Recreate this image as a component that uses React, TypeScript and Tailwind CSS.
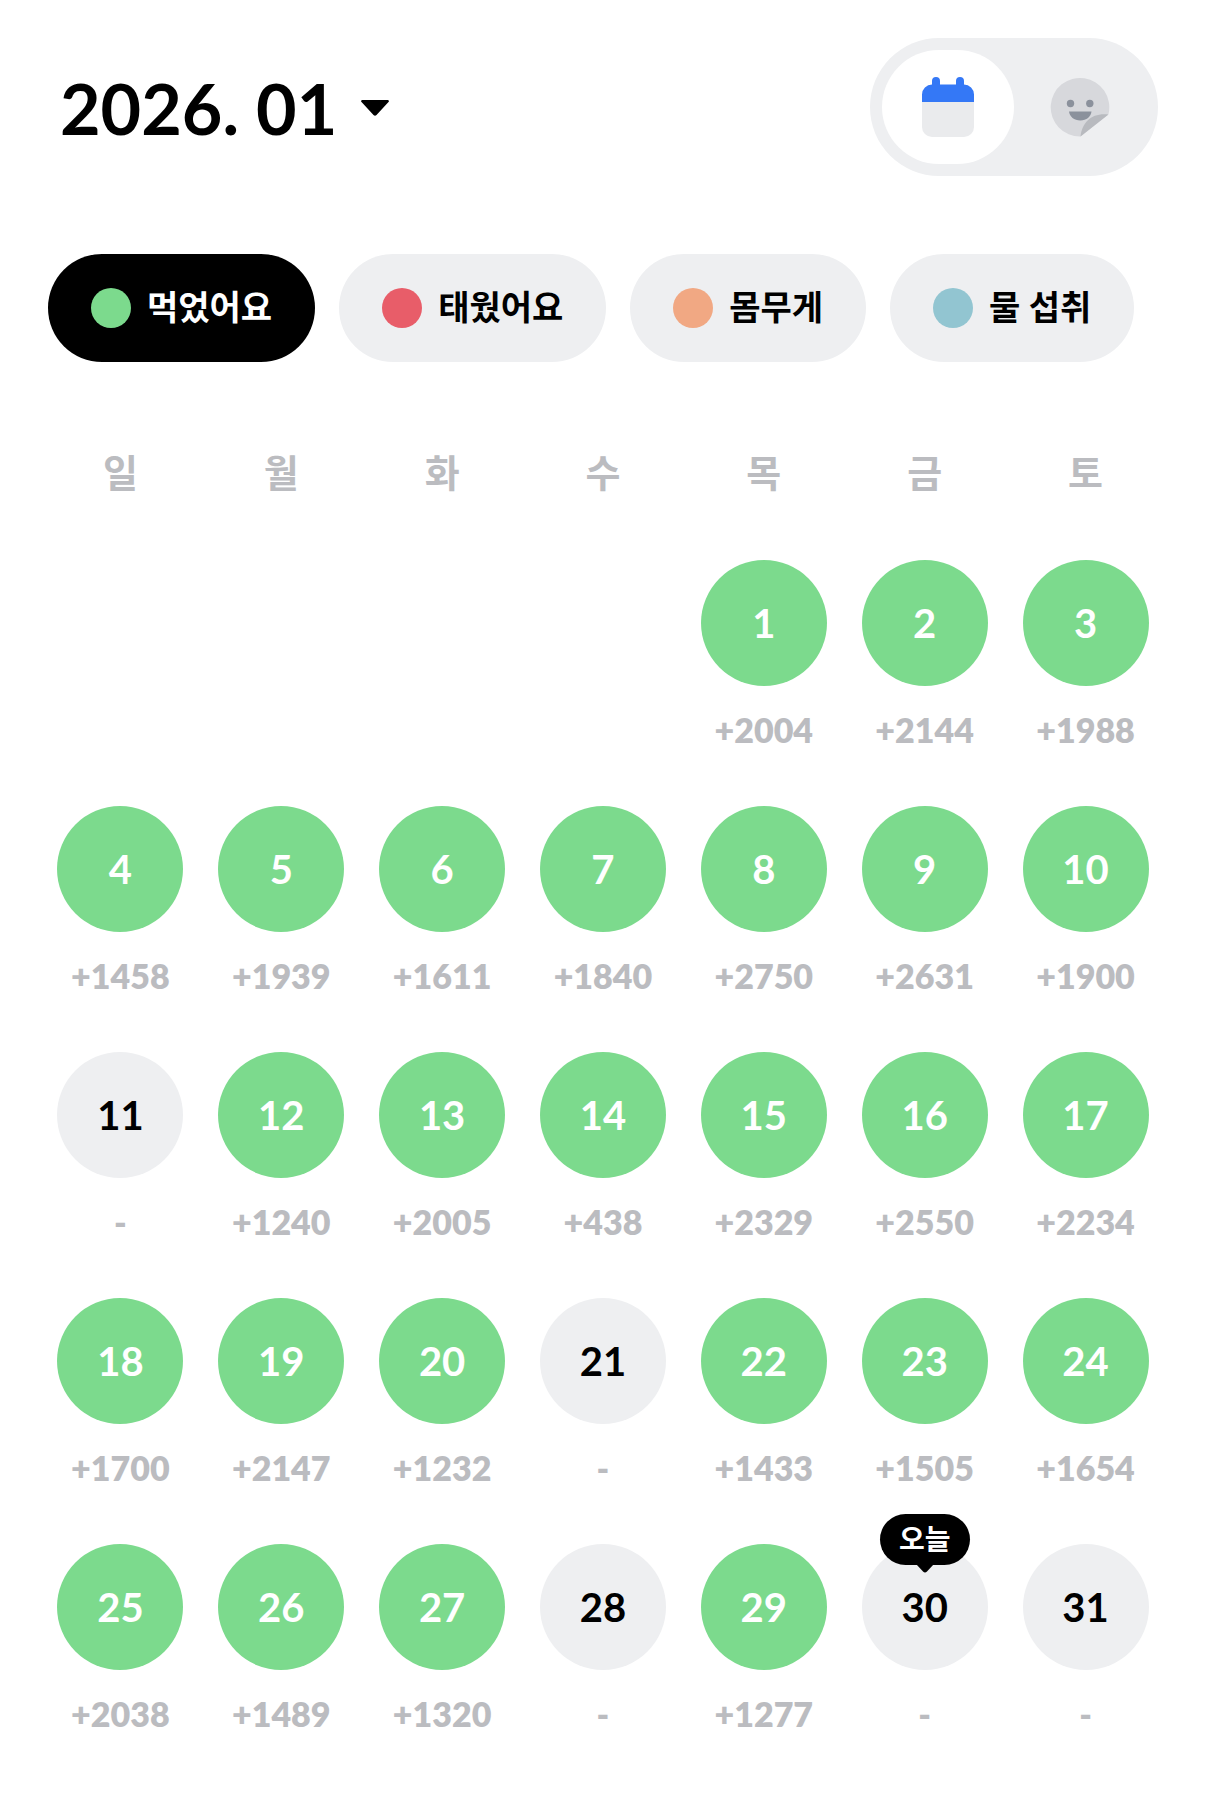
import { useState } from "react";
import clsx from "clsx";

const filters = [
  { label: "먹었어요", color: "bg-[#7cda8d]" },
  { label: "태웠어요", color: "bg-[#e85d69]" },
  { label: "몸무게", color: "bg-[#f1a883]" },
  { label: "물 섭취", color: "bg-[#92c5d1]" },
];

const weekdays = ["일", "월", "화", "수", "목", "금", "토"];

const today = 30;
const firstWeekday = 4;

// calories eaten per day, null when nothing was logged
const calories = [
  2004, 2144, 1988, 1458, 1939, 1611, 1840, 2750, 2631, 1900, null, 1240, 2005,
  438, 2329, 2550, 2234, 1700, 2147, 1232, null, 1433, 1505, 1654, 2038, 1489,
  1320, null, 1277, null, null,
];

const cells = [
  ...Array.from({ length: firstWeekday }, () => 0),
  ...calories.map((_, i) => i + 1),
];

const weeks = Array.from({ length: Math.ceil(cells.length / 7) }, (_, i) =>
  cells.slice(i * 7, i * 7 + 7)
);

function CalendarIcon() {
  return (
    <svg width="52" height="60" viewBox="0 0 52 60" aria-hidden="true">
      <path d="M0 25h52v25a10 10 0 0 1-10 10H10A10 10 0 0 1 0 50z" fill="#eaebed" />
      <path
        d="M10 7.500V4a4 4 0 0 1 8 0v3.500h16V4a4 4 0 0 1 8 0v3.500a10 10 0 0 1 10 10V25H0v-7.500A10 10 0 0 1 10 7.500z"
        fill="#3478f6"
      />
    </svg>
  );
}

function StickerIcon() {
  return (
    <svg width="60" height="60" viewBox="0 0 60 60" aria-hidden="true">
      <path d="M58.500 37A29.300 29.300 0 1 0 30.500 59.500z" fill="#d7d8dc" />
      <circle cx="20.500" cy="26.500" r="3.700" fill="#8b919c" />
      <circle cx="39.800" cy="26.500" r="3.700" fill="#8b919c" />
      <path d="M19 34.500h22.500c-.5 5-5 9-11.200 9s-10.800-4-11.300-9z" fill="#8b919c" />
      <path d="M30.500 59.500C32 45 42 35.500 58.500 37.500z" fill="#b8babf" />
    </svg>
  );
}

function TodayBadge() {
  return (
    <span className="absolute -top-[30px] left-1/2 flex h-[51px] w-[90px] -translate-x-1/2 items-center justify-center rounded-full bg-black pb-[2px] text-[28px] leading-none font-bold text-white">
      오늘
      <svg
        className="absolute top-full left-1/2 -mt-px -translate-x-1/2"
        width="18"
        height="9"
        viewBox="0 0 18 9"
        aria-hidden="true"
      >
        <path d="M0 0h18l-7 7.500q-2 2-4 0z" fill="#000" />
      </svg>
    </span>
  );
}

function Day({ day }: { day: number }) {
  const kcal = calories[day - 1];
  return (
    <div className="flex flex-col items-center pb-14">
      <button
        type="button"
        className={clsx(
          "relative flex size-[126px] items-center justify-center rounded-full text-[40px] leading-none font-bold",
          kcal ? "bg-[#7cda8d] text-white" : "bg-[#eeeff1] text-black"
        )}
      >
        {day}
        {day === today && <TodayBadge />}
      </button>
      <p className="mt-6 text-[34px] leading-10 font-extrabold text-[#bbbcc0]">
        {kcal ? `+${kcal}` : "-"}
      </p>
    </div>
  );
}

export default function App() {
  const [filter, setFilter] = useState(0);
  const [view, setView] = useState("calendar");

  return (
    <main className="bg-white font-[Lato,'Noto_Sans_CJK_KR',sans-serif] text-black">
      <header className="flex items-center justify-between px-12 pt-[38px]">
        <button type="button" className="flex items-center gap-6 pt-[2px] pl-3">
          <h1 className="text-[70px] leading-none font-bold">2026. 01</h1>
          <svg width="28" height="16" viewBox="0 0 28 16" aria-hidden="true">
            <path d="M1 0h26q1.500 1 .5 2L15.500 15q-1.500 1.500-3 0L.5 2Q-.5 1 1 0z" />
          </svg>
        </button>
        <div className="flex rounded-full bg-[#eeeff1] p-3">
          <button
            type="button"
            aria-label="달력"
            onClick={() => setView("calendar")}
            className={clsx(
              "flex h-[114px] w-[132px] items-center justify-center rounded-full",
              view === "calendar" && "bg-white"
            )}
          >
            <CalendarIcon />
          </button>
          <button
            type="button"
            aria-label="스티커"
            onClick={() => setView("sticker")}
            className={clsx(
              "flex h-[114px] w-[132px] items-center justify-center rounded-full",
              view === "sticker" && "bg-white"
            )}
          >
            <StickerIcon />
          </button>
        </div>
      </header>

      <div className="mt-[78px] flex gap-6 px-12">
        {filters.map((item, i) => (
          <button
            key={item.label}
            type="button"
            onClick={() => setFilter(i)}
            className={clsx(
              "flex h-[108px] items-center gap-4 rounded-full px-[43px] text-[34px] leading-none font-bold whitespace-nowrap",
              i === filter ? "bg-black text-white" : "bg-[#eeeff1] text-black"
            )}
          >
            <span className={clsx("size-10 rounded-full", item.color)}></span>
            <span className="pb-[2px]">{item.label}</span>
          </button>
        ))}
      </div>

      <div className="px-10 pt-[84px]">
        <table className="w-full table-fixed">
          <thead>
            <tr>
              {weekdays.map((name) => (
                <th
                  key={name}
                  scope="col"
                  className="pb-[62px] text-[38px] leading-[52px] font-bold text-[#bbbcc0]"
                >
                  {name}
                </th>
              ))}
            </tr>
          </thead>
          <tbody>
            {weeks.map((week, i) => (
              <tr key={i}>
                {week.map((day, j) => (
                  <td key={j} className="p-0 align-top">
                    {day > 0 && <Day day={day} />}
                  </td>
                ))}
              </tr>
            ))}
          </tbody>
        </table>
      </div>
    </main>
  );
}
